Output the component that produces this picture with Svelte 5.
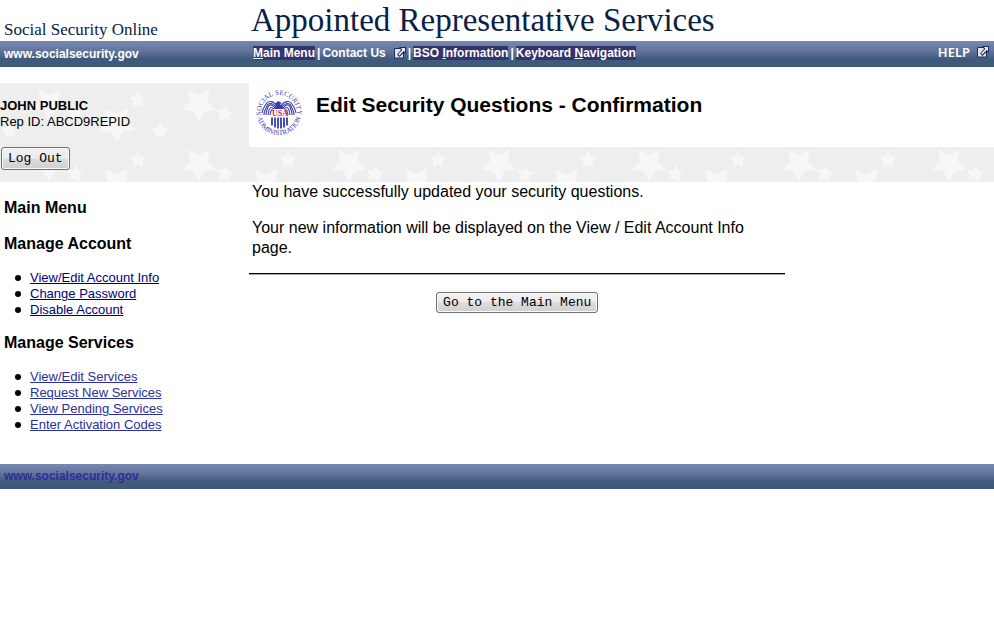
<script lang="ts">
	interface MenuGroup {
		title: string;
		visited: boolean;
		items: string[];
	}

	const user = { name: 'JOHN PUBLIC', repId: 'ABCD9REPID' };

	const groups: MenuGroup[] = [
		{
			title: 'Manage Account',
			visited: false,
			items: ['View/Edit Account Info', 'Change Password', 'Disable Account']
		},
		{
			title: 'Manage Services',
			visited: true,
			items: ['View/Edit Services', 'Request New Services', 'View Pending Services', 'Enter Activation Codes']
		}
	];
</script>

{#snippet popupIcon()}
	<svg class="popup-icon" viewBox="0 0 12 12" width="12" height="12" aria-hidden="true">
		<path d="M.5 1.500h9v9.500h-9z" fill="#e4e4e4" stroke="#1c2c5c" />
		<path d="M5 0h7v7l-2-1.500L5.500 10 3 7.500 7 3z" fill="#1c2c5c" />
		<path d="M7 1h4v4L9.700 4 5.500 8.400 4.200 7.200 8.300 3z" fill="#e8eaf2" />
	</svg>
{/snippet}

<header class="masthead">
	<div class="site-name">Social Security Online</div>
	<div class="app-name">Appointed Representative Services</div>
</header>

<div class="bar columns">
	<a class="site-link" href="#home">www.socialsecurity.gov</a>
	<nav class="top-nav">
		<a class="marked" href="#main"><u>M</u>ain Menu</a>
		<span>|</span>
		<a class="contact" href="#contact">Contact Us {@render popupIcon()}</a>
		<span>|</span>
		<a class="marked" href="#bso">BSO <u>I</u>nformation</a>
		<span>|</span>
		<a class="marked" href="#keyboard">Keyboard <u>N</u>avigation</a>
		<a class="help" href="#help">HELP {@render popupIcon()}</a>
	</nav>
</div>

<div class="banner columns">
	<div class="user">
		<div class="user-name">{user.name}</div>
		<div>Rep ID: {user.repId}</div>
		<button class="logout" type="button">Log Out</button>
	</div>
	<div class="page-title">
		<svg class="seal" viewBox="0 0 48 48" width="48" height="48" role="img" aria-label="Seal">
			<defs>
				<path id="seal-top" d="M7.500 31a18 18 0 1 1 33 0" />
				<path id="seal-bottom" d="M2 24a22 22 0 0 0 44 0" />
			</defs>
			<text class="seal-text"><textPath href="#seal-top" startOffset="50%">SOCIAL SECURITY</textPath></text>
			<text class="seal-text"><textPath href="#seal-bottom" startOffset="50%">ADMINISTRATION</textPath></text>
			<g fill="none" stroke="#3a3ab0" stroke-width="1.100">
				<path d="M22 17c-3-5-9-6-11-2-2 3-3 4-4 9" />
				<path d="M21 18c-4-5-8-4-9-1-1 3-3 4-3 9" />
				<path d="M20 19c-3-4-6-4-7-1-1 3-2 4-2 8" />
				<path d="M19 20c-3-3-4-1-5 1l-1 5" />
				<path d="M18 21c-2-1-2 1-3 5" />
				<path d="M26 17c3-5 9-6 11-2 2 3 3 4 4 9" />
				<path d="M27 18c4-5 8-4 9-1 1 3 3 4 3 9" />
				<path d="M28 19c3-4 6-4 7-1 1 3 2 4 2 8" />
				<path d="M29 20c3-3 4-1 5 1l1 5" />
				<path d="M30 21c2-1 2 1 3 5" />
			</g>
			<path d="M20 15l3-3 4 2-2 1 4 5H19l2-3z" fill="#3a3ab0" />
			<path d="M17 28.500v8M20 28.500v10M23 28.500v11M26 28.500v11M29 28.500v10M32 28.500v8" stroke="#3a3ab0" stroke-width="1.800" />
			<text class="seal-usa" x="25" y="27">USA</text>
		</svg>
		<h1>Edit Security Questions - Confirmation</h1>
	</div>
</div>

<div class="body columns">
	<nav class="side-menu">
		<h2>Main Menu</h2>
		{#each groups as group}
			<h2>{group.title}</h2>
			<ul class:visited={group.visited}>
				{#each group.items as item}
					<li><a href="#menu">{item}</a></li>
				{/each}
			</ul>
		{/each}
	</nav>
	<main>
		<p>You have successfully updated your security questions.</p>
		<p>Your new information will be displayed on the View / Edit Account Info page.</p>
		<hr />
		<button class="go-main" type="button">Go to the Main Menu</button>
	</main>
</div>

<footer class="bar">
	<a class="site-link" href="#home">www.socialsecurity.gov</a>
</footer>

<style>
	:global(body) {
		margin: 0;
		background: #fff;
		color: #000;
		font-family: 'Liberation Sans', Arial, sans-serif;
	}

	.columns,
	.masthead {
		display: grid;
		grid-template-columns: 249px 1fr;
	}

	.masthead {
		height: 41px;
		align-items: end;
		color: #0a2145;
		font-family: Georgia, 'Liberation Serif', serif;
		white-space: nowrap;
	}

	.site-name {
		padding-left: 4px;
		font-size: 17px;
		line-height: 22px;
	}

	.app-name {
		padding-left: 2px;
		font-size: 33px;
		line-height: 41px;
	}

	.bar {
		min-height: 26px;
		align-items: center;
		background: linear-gradient(#7688b2, #65779f 35%, #405a7d 70%, #3f597b);
		font-size: 12px;
		font-weight: 700;
	}

	.bar a {
		color: #fff;
		text-decoration: none;
	}

	.site-link {
		padding-left: 4px;
	}

	.top-nav {
		display: flex;
		align-items: center;
		gap: 2px;
		padding: 0 5px 2px 4px;
		color: #fff;
		line-height: 14px;
	}

	.top-nav .marked {
		background: #34346c;
	}

	.contact,
	.help {
		display: flex;
		align-items: center;
	}

	.contact {
		gap: 8px;
	}

	.help {
		gap: 7px;
		margin-left: auto;
		padding-bottom: 2px;
		font-family: 'Noto Sans', Verdana, sans-serif;
		font-size: 13px;
		font-weight: 600;
	}

	.popup-icon {
		display: block;
	}

	.banner {
		margin-top: 16px;
		padding-bottom: 35px;
		background: #eee url("data:image/svg+xml,%3Csvg xmlns='http://www.w3.org/2000/svg' xmlns:xlink='http://www.w3.org/1999/xlink' width='150' height='60'%3E%3Cdefs%3E%3Cpath id='s' d='M0-10 2.900-4 9.500-3.100 4.800 1.500 5.900 8.100 0 5-5.900 8.100-4.800 1.500-9.500-3.100-2.900-4z'/%3E%3C/defs%3E%3Cg fill='%23f7f7f7'%3E%3Cuse xlink:href='%23s' transform='translate(138 17) scale(.9)'/%3E%3Cuse xlink:href='%23s' transform='translate(49 21) rotate(180) scale(1.800)'/%3E%3Cuse xlink:href='%23s' transform='translate(75 31) rotate(8) scale(.9)'/%3E%3Cuse xlink:href='%23s' transform='translate(10 48) scale(.9)'/%3E%3Cuse xlink:href='%23s' transform='translate(117 41) rotate(178) scale(1.900)'/%3E%3C/g%3E%3C/svg%3E");
	}

	.user {
		height: 64px;
		padding-top: 15px;
		box-sizing: border-box;
		font-size: 13px;
		line-height: 16px;
	}

	.user-name {
		font-weight: 700;
	}

	button {
		padding: 0 6px;
		border: 1px solid #707070;
		border-radius: 3px;
		background: linear-gradient(#f2f2f2, #ebebeb 50%, #ddd 50%, #cfcfcf);
		box-shadow: inset 0 0 0 1px #fafafa;
		color: #000;
		font-family: 'Liberation Mono', 'Courier New', monospace;
		font-size: 13px;
	}

	.logout {
		height: 23px;
		margin: 17px 0 0 1px;
	}

	.page-title {
		display: flex;
		align-items: flex-start;
		gap: 13px;
		padding: 6px;
		background: #fff;
	}

	.seal-text {
		fill: #3a3ab0;
		font-family: 'Liberation Serif', serif;
		font-size: 7px;
		text-anchor: middle;
	}

	.seal-usa {
		fill: #d8203c;
		font-family: 'Liberation Serif', serif;
		font-size: 8px;
		font-weight: 700;
		text-anchor: middle;
	}

	h1 {
		margin: 4px 0 0;
		font-size: 21px;
		line-height: 24px;
	}

	.side-menu {
		padding: 16px 4px 0;
	}

	h2 {
		margin: 0 0 16px;
		font-size: 16px;
		line-height: 20px;
	}

	ul {
		margin: 0 0 15px;
		padding-left: 11px;
		list-style: none;
		font-size: 13px;
		line-height: 16px;
	}

	li {
		display: flex;
		align-items: center;
		gap: 9px;
	}

	li::before {
		content: '';
		width: 6px;
		height: 6px;
		border-radius: 50%;
		background: #000;
	}

	li a {
		color: #000080;
	}

	.visited a {
		color: #2a2f9a;
	}

	main {
		width: 72%;
		text-align: center;
	}

	p {
		margin: 0 0 16px;
		padding: 0 3px;
		font-size: 16px;
		line-height: 20px;
		text-align: left;
	}

	p + hr {
		margin: -1px 0 17px;
		border: 0;
		border-top: 1px solid #000;
		border-bottom: 1px solid #aaa;
	}

	.go-main {
		height: 21px;
	}

	footer.bar {
		display: flex;
		min-height: 25px;
		margin-top: 16px;
	}

	footer.bar a {
		padding-bottom: 1px;
		color: #2a2f9a;
	}
</style>
